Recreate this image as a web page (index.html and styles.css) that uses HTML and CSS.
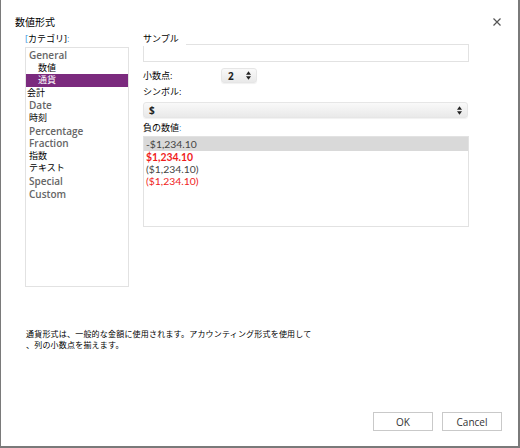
FILE: index.html
```html
<!DOCTYPE html>
<html lang="ja">
<head>
<meta charset="utf-8">
<title>数値形式</title>
<link rel="stylesheet" href="styles.css">
</head>
<body>
<div class="dialog">
  <div class="header">
    <div class="title">数値形式</div>
    <button class="close" aria-label="close">
      <svg width="8" height="8" viewBox="0 0 8 8"><path d="M0.5 0.5 L7.5 7.5 M7.5 0.5 L0.5 7.5" stroke="#555" stroke-width="1.2" fill="none"/></svg>
    </button>
  </div>
  <div class="main">
    <div class="left">
      <div class="label"><span class="blue">[</span>カテゴリ]<span class="blue">:</span></div>
      <div class="catlist">
        <div class="cat en">General</div>
        <div class="cat jp indent">数値</div>
        <div class="cat jp indent selected">通貨</div>
        <div class="cat jp flush">会計</div>
        <div class="cat en">Date</div>
        <div class="cat jp">時刻</div>
        <div class="cat en">Percentage</div>
        <div class="cat en">Fraction</div>
        <div class="cat jp">指数</div>
        <div class="cat jp">テキスト</div>
        <div class="cat en">Special</div>
        <div class="cat en">Custom</div>
      </div>
    </div>
    <div class="right">
      <div class="label sample-label">サンプル</div>
      <div class="sample"></div>
      <div class="row decimal">
        <div class="label rlabel">小数点:</div>
        <div class="spinner">
          <span class="val">2</span>
          <svg class="arrows" width="5" height="9" viewBox="0 0 5 9"><path d="M0 3.8 L2.5 0.3 L5 3.8 Z M0 5.2 L5 5.2 L2.5 8.7 Z" fill="#222"/></svg>
        </div>
      </div>
      <div class="label">シンボル:</div>
      <div class="select">
        <span class="val">$</span>
        <svg class="arrows" width="5" height="9" viewBox="0 0 5 9"><path d="M0 3.8 L2.5 0.3 L5 3.8 Z M0 5.2 L5 5.2 L2.5 8.7 Z" fill="#222"/></svg>
      </div>
      <div class="label neg-label">負の数値<span class="blue">:</span></div>
      <div class="neglist">
        <div class="neg selected">-$1,234.10</div>
        <div class="neg red strong">$1,234.10</div>
        <div class="neg">($1,234.10)</div>
        <div class="neg red">($1,234.10)</div>
      </div>
    </div>
  </div>
  <div class="desc">通貨形式は、一般的な金額に使用されます。アカウンティング形式を使用して<br>、列の小数点を揃えます。</div>
  <div class="buttons">
    <button class="btn">OK</button>
    <button class="btn">Cancel</button>
  </div>
</div>
</body>
</html>
```

FILE: styles.css
```css
html, body {
  margin: 0;
  padding: 0;
  background: #fff;
}
body {
  font-family: "Open Sans", "Noto Sans CJK JP", sans-serif;
  color: #000;
}
.dialog {
  width: 520px;
  height: 448px;
  box-sizing: border-box;
  border-left: 1px solid #7a7a7a;
  border-right: 2px solid #7a7a7a;
  border-bottom: 2px solid #7a7a7a;
  display: flex;
  flex-direction: column;
  background: #fff;
}
.header {
  display: flex;
  justify-content: space-between;
  align-items: center;
  height: 14px;
  margin-top: 15px;
  padding-left: 14px;
  padding-right: 17px;
}
.title {
  font-size: 10px;
  line-height: 14px;
}
.close {
  border: 0;
  background: none;
  padding: 0;
  width: 8px;
  height: 8px;
  display: flex;
}
.main {
  display: flex;
  margin-top: 3px;
  padding-left: 24px;
  gap: 14px;
}
.label {
  font-size: 9px;
  line-height: 14px;
  height: 14px;
  white-space: nowrap;
}
.blue { color: #3b8fe0; }
.left {
  width: 104px;
  display: flex;
  flex-direction: column;
}
.left .label { margin-bottom: 1px; }
.catlist {
  height: 240px;
  box-sizing: border-box;
  border: 1px solid #e2e2e2;
  padding-top: 1px;
}
.cat {
  line-height: 12.6px;
  height: 12.6px;
  padding-left: 3px;
  white-space: nowrap;
}
.cat.en {
  font-size: 10px;
  font-weight: 600;
  color: #666;
}
.cat.jp {
  font-size: 9px;
  color: #000;
}
.cat.indent { padding-left: 12px; }
.cat.flush { padding-left: 1px; }
.cat.selected {
  background: #7b2a7e;
  color: #fff;
}
.right {
  width: 326px;
  display: flex;
  flex-direction: column;
}
.sample-label {
  position: relative;
  z-index: 1;
  align-self: flex-start;
  background: #fff;
  padding-right: 7px;
  margin-bottom: -2px;
}
.sample {
  height: 18px;
  box-sizing: border-box;
  border: 1px solid #e2e2e2;
}
.row {
  display: flex;
  align-items: center;
}
.decimal {
  margin-top: 6px;
  margin-bottom: 2px;
}
.rlabel { width: 78px; }
.spinner, .select {
  display: flex;
  align-items: center;
  justify-content: space-between;
  box-sizing: border-box;
  border: 1px solid #e6e6e6;
  border-radius: 3px;
  background: linear-gradient(#f9f9f9, #e9e9e9);
  box-shadow: 0 1px 1px rgba(0,0,0,0.06);
}
.spinner {
  width: 36px;
  height: 15px;
  padding: 0 5px 0 6px;
}
.val {
  font-size: 10px;
  font-weight: 700;
  color: #222;
  line-height: 12px;
}
.select {
  width: 325px;
  height: 16px;
  margin-top: 3px;
  padding: 0 5px 0 5px;
}
.neg-label { margin-top: 3px; margin-bottom: 1px; }
.neglist {
  height: 91px;
  box-sizing: border-box;
  border: 1px solid #e2e2e2;
}
.neg {
  font-family: Lato, "Open Sans", sans-serif;
  font-size: 10.4px;
  line-height: 12px;
  height: 12px;
  padding-left: 2px;
  color: #444;
  white-space: nowrap;
}
.neg.selected {
  background: #d9d9d9;
  padding-top: 1px;
  padding-bottom: 1px;
}
.neg.red { color: #f01c1c; }
.neg.strong { font-weight: 700; }
.desc {
  margin-top: 41px;
  padding-left: 25px;
  font-size: 8px;
  line-height: 11px;
  letter-spacing: 0.2px;
}
.buttons {
  margin-top: auto;
  margin-bottom: 15px;
  display: flex;
  justify-content: flex-end;
  gap: 9px;
  padding-right: 16px;
}
.btn {
  width: 60px;
  height: 19px;
  box-sizing: border-box;
  border: 1px solid #c9c9c9;
  background: #fff;
  font-family: "Open Sans", sans-serif;
  font-size: 10px;
  color: #333;
  padding: 0;
}
```
